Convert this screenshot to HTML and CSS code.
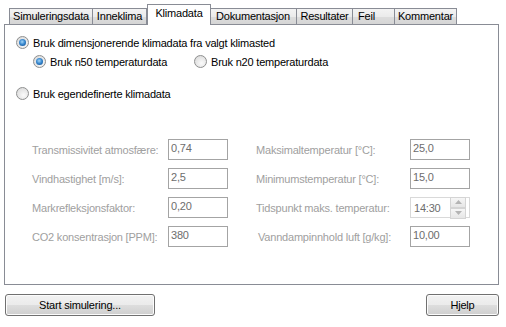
FILE: index.html
```html
<!DOCTYPE html>
<html lang="no">
<head>
    <meta charset="UTF-8">
    <title>Klimadata</title>
    <link rel="stylesheet" href="styles.css">
</head>
<body>
    <div class="window">
        <div class="tabs">
            <div class="tab tab-sim">Simuleringsdata</div>
            <div class="tab tab-inne">Inneklima</div>
            <div class="tab tab-active">Klimadata</div>
            <div class="tab tab-dok">Dokumentasjon</div>
            <div class="tab tab-res">Resultater</div>
            <div class="tab tab-feil">Feil</div>
            <div class="tab tab-komm">Kommentar</div>
        </div>

        <div class="panel">
            <div class="choice choice-main"><span class="radio checked"></span>Bruk dimensjonerende klimadata fra valgt klimasted</div>
            <div class="sub-choices">
                <div class="choice choice-n50"><span class="radio checked"></span>Bruk n50 temperaturdata</div>
                <div class="choice"><span class="radio"></span>Bruk n20 temperaturdata</div>
            </div>
            <div class="choice choice-custom"><span class="radio"></span>Bruk egendefinerte klimadata</div>

            <!-- disabled fields for custom climate data -->
            <div class="fields">
                <label class="field-label">Transmissivitet atmosfære:</label>
                <div class="box">0,74</div>
                <span></span>
                <label class="field-label">Maksimaltemperatur [°C]:</label>
                <div class="box">25,0</div>

                <label class="field-label">Vindhastighet [m/s]:</label>
                <div class="box">2,5</div>
                <span></span>
                <label class="field-label">Minimumstemperatur [°C]:</label>
                <div class="box">15,0</div>

                <label class="field-label">Markrefleksjonsfaktor:</label>
                <div class="box">0,20</div>
                <span></span>
                <label class="field-label">Tidspunkt maks. temperatur:</label>
                <div class="box box-time">
                    <span>14:30</span>
                    <div class="spin">
                        <div class="spin-btn"><svg width="7" height="4" viewBox="0 0 7 4"><path d="M0 4 L3.5 0 L7 4 Z" fill="#b4b4b4"/></svg></div>
                        <div class="spin-btn"><svg width="7" height="4" viewBox="0 0 7 4"><path d="M0 0 L3.5 4 L7 0 Z" fill="#b4b4b4"/></svg></div>
                    </div>
                </div>

                <label class="field-label">CO2 konsentrasjon [PPM]:</label>
                <div class="box">380</div>
                <span></span>
                <label class="field-label field-indent">Vanndampinnhold luft [g/kg]:</label>
                <div class="box">10,00</div>
            </div>
        </div>

        <div class="footer">
            <button type="button" class="btn btn-start">Start simulering...</button>
            <button type="button" class="btn btn-help">Hjelp</button>
        </div>
    </div>
</body>
</html>
```

FILE: styles.css
```css
body {
    margin: 0;
    padding: 0;
    background-color: #ffffff;
    font-family: 'Liberation Sans', Arial, sans-serif;
    font-size: 11px;
    letter-spacing: -0.2px;
    color: #000;
}

.window {
    width: 506px;
    height: 327px;
    padding-top: 4px;
    box-sizing: border-box;
}

/* tab strip */
.tabs {
    display: flex;
    align-items: flex-end;
    height: 20px;
    padding-left: 9px;
}

.tab {
    box-sizing: border-box;
    height: 16px;
    line-height: 14px;
    padding: 0;
    text-align: center;
    border: 1px solid #898c95;
    border-bottom: none;
    border-left: none;
    background: linear-gradient(#f3f3f3, #ebebeb 50%, #dddddd 51%, #d5d5d5);
    white-space: nowrap;
}

.tab-sim {
    width: 84px;
    border-left: 1px solid #898c95;
}
.tab-inne { width: 54px; }
.tab-dok { width: 87px; }
.tab-res { width: 56px; }
.tab-feil {
    width: 42px;
    text-align: left;
    padding-left: 5px;
}
.tab-komm { width: 62px; }

.tab-active {
    width: 64px;
    height: 21px;
    line-height: 14px;
    padding-top: 1px;
    margin-bottom: -1px;
    margin-right: -1px;
    border-left: 1px solid #898c95;
    background: #fff;
    position: relative;
    z-index: 1;
}

.panel {
    width: 495px;
    height: 261px;
    margin-left: 4px;
    box-sizing: border-box;
    border: 1px solid #898c95;
    background: #fff;
    padding: 10px 0 0 11px;
}

/* radio buttons */
.choice {
    display: flex;
    align-items: center;
    height: 15px;
    white-space: nowrap;
}

.radio {
    width: 13px;
    height: 13px;
    box-sizing: border-box;
    border-radius: 50%;
    border: 1px solid #8e8f8f;
    background: radial-gradient(circle at 60% 65%, #fbfbfb, #e0e0e0 70%, #cfcfcf);
    margin-right: 4px;
    flex-shrink: 0;
    display: flex;
    align-items: center;
    justify-content: center;
}

.radio.checked::after {
    content: "";
    width: 7px;
    height: 7px;
    border-radius: 50%;
    background: radial-gradient(circle at 45% 40%, #a5d6f7, #3b8ad0 45%, #0f4f94 90%);
}

.sub-choices {
    display: flex;
    margin-top: 4px;
    padding-left: 17px;
}

.choice-n50 {
    width: 161px;
}

.choice-custom {
    margin-top: 17px;
}

/* field grid */
.fields {
    display: grid;
    grid-template-columns: 136px 60px 28px 154px 60px;
    grid-auto-rows: 21px;
    row-gap: 8px;
    margin-top: 38px;
    padding-left: 16px;
    align-items: center;
}

.field-label {
    color: #a0a0a0;
    white-space: nowrap;
}

.field-indent {
    padding-left: 2px;
}

.box {
    height: 21px;
    box-sizing: border-box;
    border: 1px solid #a4a4a4;
    padding: 2px 0 0 2px;
    color: #6d6d6d;
    background: #fff;
}

.box-time {
    display: flex;
    justify-content: space-between;
    border-color: #d9d9d9;
    padding: 0 3px 0 3px;
    align-items: center;
}

.spin {
    display: flex;
    flex-direction: column;
    width: 16px;
}

.spin-btn {
    height: 9px;
    border: 1px solid #d4d4d4;
    background: linear-gradient(#f6f6f6, #e6e6e6);
    display: flex;
    align-items: center;
    justify-content: center;
}

/* bottom buttons */
.footer {
    display: flex;
    justify-content: space-between;
    margin-top: 9px;
    padding: 0 7px 0 5px;
}

.btn {
    height: 22px;
    box-sizing: border-box;
    border: 1px solid #707070;
    border-radius: 3px;
    background: linear-gradient(#f2f2f2, #ebebeb 50%, #dddddd 51%, #cfcfcf);
    font-family: 'Liberation Sans', Arial, sans-serif;
    font-size: 11px;
    letter-spacing: -0.2px;
    color: #000;
    padding: 0;
    box-shadow: inset 0 0 0 1px #fcfcfc;
}

.btn-start {
    width: 150px;
}

.btn-help {
    width: 73px;
}
```
